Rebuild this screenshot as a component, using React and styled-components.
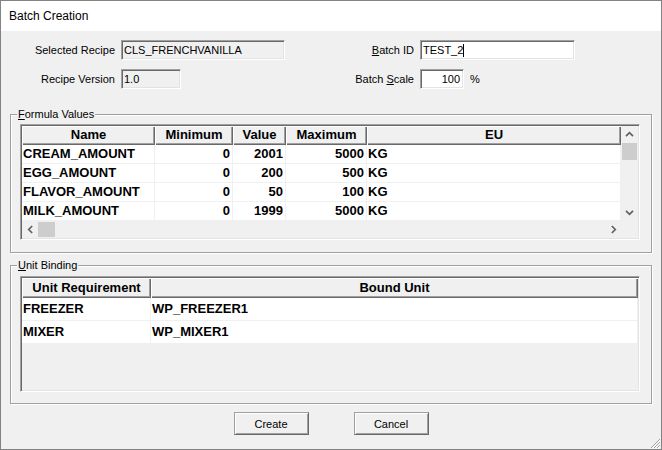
import React from 'react';
import styled, { createGlobalStyle } from 'styled-components';

const Global = createGlobalStyle`
  html, body { margin: 0; padding: 0; background: #fff; }
  body { font-family: "Liberation Sans", Arial, sans-serif; }
`;

const Window = styled.div`
  position: relative;
  width: 662px;
  height: 450px;
  box-sizing: border-box;
  border: 1px solid #838383;
  display: flex;
  flex-direction: column;
  background: #f0f0f0;
  font-family: "Liberation Sans", Arial, sans-serif;
  color: #000;
  overflow: hidden;
`;

const TitleBar = styled.div`
  height: 30px;
  flex: none;
  background: #fff;
  display: flex;
  align-items: center;
  padding-left: 8px;
  font-size: 12px;
`;

const Body = styled.div`
  flex: 1;
  display: flex;
  flex-direction: column;
  padding: 9px 9px 0;
`;

const Form = styled.div`
  display: grid;
  grid-template-columns: 105px 164px 123px auto;
  column-gap: 6px;
  row-gap: 9px;
  font-size: 11px;
  align-items: center;
`;

const Label = styled.div`
  text-align: right;
  line-height: 20px;
  white-space: nowrap;
`;

const Field = styled.div`
  box-sizing: border-box;
  width: ${p => p.$w}px;
  height: 20px;
  border: 1px solid;
  border-color: #a0a0a0 #fff #fff #a0a0a0;
  box-shadow: inset 1px 1px 0 #696969, inset -1px -1px 0 #e3e3e3;
  background: ${p => (p.$ro ? '#f0f0f0' : '#fff')};
  padding: 0 ${p => (p.$right ? '3px' : '2px')} 0 2px;
  display: flex;
  align-items: center;
  justify-content: ${p => (p.$right ? 'flex-end' : 'flex-start')};
  font-size: 11px;
  white-space: nowrap;
  justify-self: start;
`;

const Caret = styled.span`
  display: inline-block;
  width: 1px;
  height: 13px;
  background: #000;
`;

const ScaleWrap = styled.div`
  display: flex;
  align-items: center;
  gap: 6px;
`;

const GroupBox = styled.div`
  position: relative;
  box-sizing: border-box;
  height: 139px;
  margin-top: ${p => p.$mt}px;
  border: 1px solid #a0a0a0;
  box-shadow: inset 1px 1px 0 #fff, 1px 1px 0 #fff;
  padding: ${p => p.$pt}px 11px 0 9px;
`;

const Caption = styled.div`
  position: absolute;
  top: -7px;
  left: 6px;
  padding: 0 1px;
  background: #f0f0f0;
  font-size: 11px;
  line-height: 13px;
`;

const ListView = styled.div`
  box-sizing: border-box;
  width: 620px;
  height: 116px;
  border: 1px solid;
  border-color: #a0a0a0 #fff #fff #a0a0a0;
  box-shadow: inset 1px 1px 0 #696969, inset -1px -1px 0 #e3e3e3;
  padding: 1px;
  background: #f0f0f0;
  display: grid;
  grid-template-columns: ${p => (p.$scroll ? '1fr 17px' : '1fr')};
  grid-template-rows: ${p => (p.$scroll ? '1fr 17px' : '1fr')};
  overflow: hidden;
`;

const Table = styled.div`
  display: grid;
  grid-template-columns: ${p => p.$cols};
  grid-auto-rows: ${p => p.$row}px;
  grid-template-rows: ${p => p.$head}px;
  align-content: start;
  min-width: 0;
  overflow: hidden;
`;

const HeadCell = styled.div`
  box-sizing: border-box;
  background: #f0f0f0;
  box-shadow: inset 1px 1px 0 #fff, inset -1px -1px 0 #696969, inset -2px -2px 0 #a0a0a0;
  font-size: 13px;
  font-weight: bold;
  text-align: center;
  line-height: ${p => p.$h - 1}px;
  white-space: nowrap;
  overflow: hidden;
`;

const Cell = styled.div`
  box-sizing: border-box;
  background: #fff;
  border-right: 1px solid #f0f0f0;
  border-bottom: 1px solid #f0f0f0;
  font-size: 13px;
  font-weight: bold;
  line-height: ${p => p.$h - 1}px;
  padding: 0 2px 0 1px;
  text-align: ${p => (p.$right ? 'right' : 'left')};
  white-space: nowrap;
  overflow: hidden;
`;

const VScroll = styled.div`
  grid-row: 1;
  grid-column: 2;
  display: flex;
  flex-direction: column;
  background: #f0f0f0;
`;

const HScroll = styled.div`
  grid-row: 2;
  grid-column: 1;
  display: flex;
  background: #f0f0f0;
`;

const Corner = styled.div`
  background: #f0f0f0;
`;

const ArrowBtn = styled.div`
  flex: none;
  width: ${p => (p.$h ? '16px' : '100%')};
  height: ${p => (p.$h ? '100%' : '17px')};
  display: flex;
  align-items: center;
  justify-content: center;
`;

const Thumb = styled.div`
  flex: none;
  background: #cdcdcd;
  ${p => (p.$h ? 'width: 17px; margin: 1px 0;' : 'height: 17px; margin: 0 1px;')}
`;

const Track = styled.div`
  flex: 1;
`;

const Chevron = styled.svg`
  transform: rotate(${p => p.$rot}deg);
`;

const Arrow = ({ rot }) => (
  <Chevron $rot={rot} width="9" height="7" viewBox="0 0 9 7">
    <path d="M1 5.2 L4.5 1.7 L8 5.2" fill="none" stroke="#606060" strokeWidth="1.7" />
  </Chevron>
);

const ButtonRow = styled.div`
  display: flex;
  justify-content: center;
  gap: 45px;
  margin-top: 8px;
`;

const Button = styled.div`
  box-sizing: border-box;
  width: 75px;
  height: 23px;
  border: 1px solid;
  border-color: #a0a0a0 #696969 #696969 #a0a0a0;
  box-shadow: inset 1px 1px 0 #fff, inset -1px -1px 0 #a0a0a0;
  background: #f0f0f0;
  font-size: 11px;
  display: flex;
  align-items: center;
  justify-content: center;
`;

const Grip = styled.svg`
  position: absolute;
  right: 0;
  bottom: 0;
`;

const formulas = [
  ['CREAM_AMOUNT', '0', '2001', '5000', 'KG'],
  ['EGG_AMOUNT', '0', '200', '500', 'KG'],
  ['FLAVOR_AMOUNT', '0', '50', '100', 'KG'],
  ['MILK_AMOUNT', '0', '1999', '5000', 'KG'],
];

const units = [
  ['FREEZER', 'WP_FREEZER1'],
  ['MIXER', 'WP_MIXER1'],
];

export default function App() {
  return (
    <>
      <Global />
      <Window>
        <TitleBar>Batch Creation</TitleBar>
        <Body>
          <Form>
            <Label>Selected Recipe</Label>
            <Field $w={164} $ro>CLS_FRENCHVANILLA</Field>
            <Label><u>B</u>atch ID</Label>
            <Field $w={155}>TEST_2<Caret /></Field>
            <Label>Recipe Version</Label>
            <Field $w={60} $ro>1.0</Field>
            <Label>Batch <u>S</u>cale</Label>
            <ScaleWrap>
              <Field $w={44} $right>100</Field>
              <span>%</span>
            </ScaleWrap>
          </Form>

          <GroupBox $mt={25} $pt={9}>
            <Caption><u>F</u>ormula Values</Caption>
            <ListView $scroll>
              <Table $cols="133px 78px 53px 81px 1fr" $head={19} $row={19}>
                <HeadCell $h={19}>Name</HeadCell>
                <HeadCell $h={19}>Minimum</HeadCell>
                <HeadCell $h={19}>Value</HeadCell>
                <HeadCell $h={19}>Maximum</HeadCell>
                <HeadCell $h={19}>EU</HeadCell>
                {formulas.map(r => (
                  <React.Fragment key={r[0]}>
                    <Cell $h={19}>{r[0]}</Cell>
                    <Cell $h={19} $right>{r[1]}</Cell>
                    <Cell $h={19} $right>{r[2]}</Cell>
                    <Cell $h={19} $right>{r[3]}</Cell>
                    <Cell $h={19}>{r[4]}</Cell>
                  </React.Fragment>
                ))}
              </Table>
              <VScroll>
                <ArrowBtn><Arrow rot={0} /></ArrowBtn>
                <Thumb />
                <Track />
                <ArrowBtn><Arrow rot={180} /></ArrowBtn>
              </VScroll>
              <HScroll>
                <ArrowBtn $h><Arrow rot={-90} /></ArrowBtn>
                <Thumb $h />
                <Track />
                <ArrowBtn $h><Arrow rot={90} /></ArrowBtn>
              </HScroll>
              <Corner />
            </ListView>
          </GroupBox>

          <GroupBox $mt={12} $pt={10}>
            <Caption><u>U</u>nit Binding</Caption>
            <ListView>
              <Table $cols="129px 1fr" $head={20} $row={23}>
                <HeadCell $h={20}>Unit Requirement</HeadCell>
                <HeadCell $h={20}>Bound Unit</HeadCell>
                {units.map(r => (
                  <React.Fragment key={r[0]}>
                    <Cell $h={23}>{r[0]}</Cell>
                    <Cell $h={23}>{r[1]}</Cell>
                  </React.Fragment>
                ))}
              </Table>
            </ListView>
          </GroupBox>

          <ButtonRow>
            <Button>Create</Button>
            <Button>Cancel</Button>
          </ButtonRow>
        </Body>
        <Grip width="13" height="13" viewBox="0 0 13 13">
          <path d="M12 3 L3 12 M12 6 L6 12 M12 9 L9 12" stroke="#a0a0a0" strokeWidth="1" />
          <path d="M12.7 3.7 L3.7 12.7 M12.7 6.7 L6.7 12.7 M12.7 9.7 L9.7 12.7" stroke="#fff" strokeWidth="1" />
        </Grip>
      </Window>
    </>
  );
}
